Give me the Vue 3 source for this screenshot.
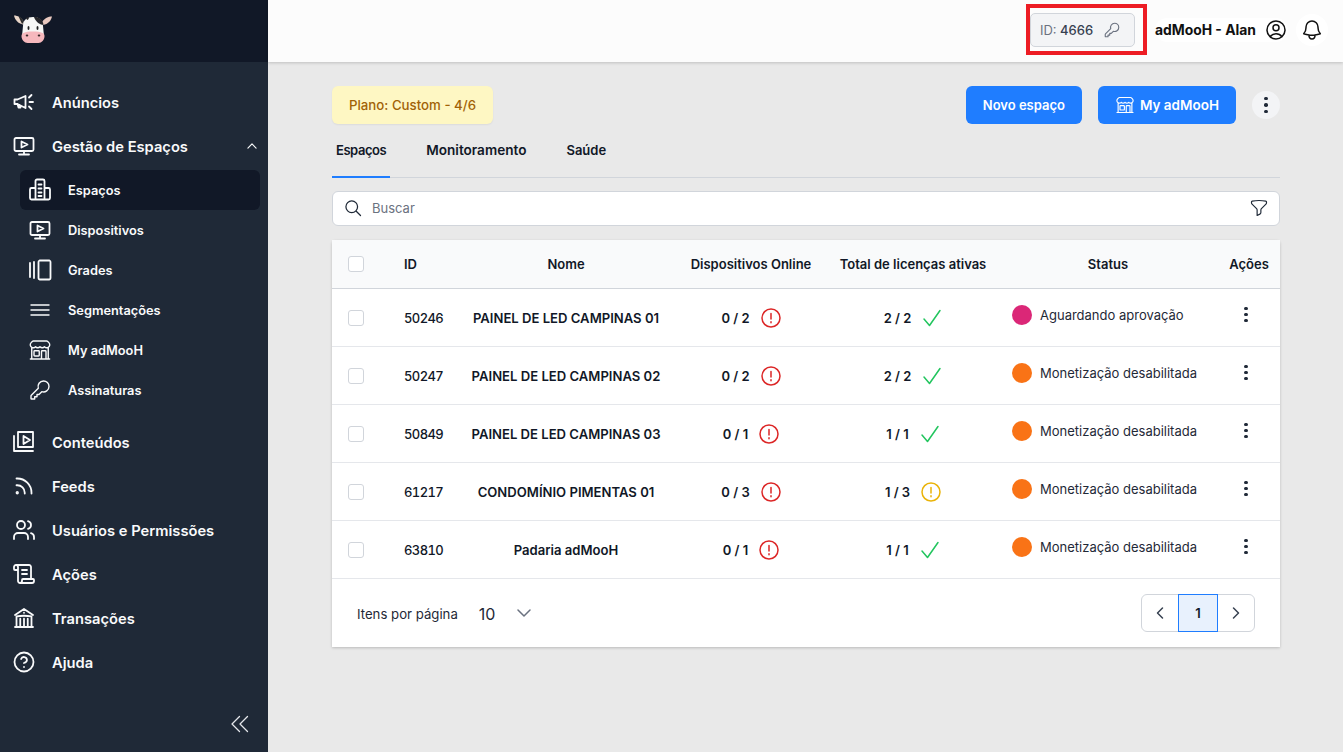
<script setup>
const icons = {
  tv: 'M4 4h16a1.5 1.5 0 0 1 1.5 1.5v10A1.5 1.5 0 0 1 20 17H4a1.5 1.5 0 0 1-1.5-1.5v-10A1.5 1.5 0 0 1 4 4Z M12 17v3.5 M7 20.5h10 M9.5 7.5l6 3-6 3Z',
  building: 'M9 1.500h6a1.500 1.500 0 0 1 1.500 1.500v18.500h-9V3A1.500 1.500 0 0 1 9 1.500Z M7.500 10H3.500A1.500 1.500 0 0 0 2 11.500v8.500a1.500 1.500 0 0 0 1.500 1.500h17a1.500 1.500 0 0 0 1.500-1.500v-8.500a1.500 1.500 0 0 0-1.500-1.500h-4 M10.500 6.500h3 M10.500 10.500h3 M10.500 14.500h3 M10.500 18h3',
  grid: 'M2 5v14 M6 4v16 M11.500 2.500h10a1.500 1.500 0 0 1 1 1.500v16a1.500 1.500 0 0 1-1 1.500h-10a1.500 1.500 0 0 1-1-1.500V4a1.500 1.500 0 0 1 1-1.500Z',
  lines: 'M3 7h18 M3 12h18 M3 17h18',
  store: 'M13.5 21v-7.5a.75.75 0 0 1 .75-.75h3a.75.75 0 0 1 .75.75V21m-4.5 0H2.36m11.14 0H18m0 0h3.64m-1.39 0V9.349M3.75 21V9.349m0 0a3.001 3.001 0 0 0 3.75-.615A2.993 2.993 0 0 0 9.75 9.75c.896 0 1.7-.393 2.25-1.016a2.993 2.993 0 0 0 2.25 1.016c.896 0 1.7-.393 2.25-1.015a3.001 3.001 0 0 0 3.75.614m-16.5 0a3.004 3.004 0 0 1-.621-4.72l1.189-1.19A1.5 1.5 0 0 1 5.378 3h13.243a1.5 1.5 0 0 1 1.06.44l1.19 1.189a3 3 0 0 1-.621 4.72M6.75 18h3.75a.75.75 0 0 0 .75-.75V13.5a.75.75 0 0 0-.75-.75H6.75a.75.75 0 0 0-.75.75v3.75c0 .414.336.75.75.75Z',
  key: 'M15.5 3a5.5 5.5 0 0 1 5.5 5.5 5.5 5.5 0 0 1-7.2 5.2L11 16.500H9v2.300H6.700V21H3.500a.5.5 0 0 1-.5-.5v-2.600a1 1 0 0 1 .300-.700l7-7A5.500 5.500 0 0 1 15.500 3Z',
  megaphone: 'M2.500 9.500v4.500h3l8 4V6L5.500 9.500H2.500Z M5.500 14l1 3.500h2l-.8-2.600 M17 7.500l2.500-2.500 M17.500 12h3.500 M17 16.500l2.500 2.500',
  media: 'M6 2h15v15H6Z M11.500 6l6.500 4-6.500 4Z M2 6v15h19',
  rss: 'M12.750 19.500v-.750a7.500 7.500 0 0 0-7.500-7.500H4.500m0-6.750h.750c7.870 0 14.250 6.380 14.250 14.250v.750M6 18.750a.750.750 0 1 1-1.500 0 .750.750 0 0 1 1.500 0Z',
  users: 'M16 21v-2a4 4 0 0 0-4-4H6a4 4 0 0 0-4 4v2 M9 3a4 4 0 1 0 0 8 4 4 0 0 0 0-8Z M22 21v-2a4 4 0 0 0-3-3.870 M16 3.130a4 4 0 0 1 0 7.750',
  scroll: 'M19 17V5a2 2 0 0 0-2-2H4 M8 21h12a2 2 0 0 0 2-2v-1a1 1 0 0 0-1-1H11a1 1 0 0 0-1 1v1a2 2 0 1 1-4 0V5a2 2 0 1 0-4 0v2a1 1 0 0 0 1 1h3 M15 8h-5 M15 12h-5',
  bank: 'M12 21v-8.250M15.750 21v-8.250M8.250 21v-8.250M3 9l9-6 9 6m-1.500 12V10.332A48.360 48.360 0 0 0 12 9.750c-2.551 0-5.056.2-7.500.582V21M3 21h18M12 6.750h.008v.008H12V6.750Z',
  help: 'M12 2.500a9.500 9.500 0 1 0 0 19 9.500 9.500 0 0 0 0-19Z M9.100 9a3 3 0 0 1 5.830 1c0 2-3 3-3 3 M12 17h.010',
}
const topItems = [
  { label: 'Conteúdos', icon: 'media' },
  { label: 'Feeds', icon: 'rss' },
  { label: 'Usuários e Permissões', icon: 'users' },
  { label: 'Ações', icon: 'scroll' },
  { label: 'Transações', icon: 'bank' },
  { label: 'Ajuda', icon: 'help' },
]
const subItems = [
  { label: 'Espaços', icon: 'building', active: true },
  { label: 'Dispositivos', icon: 'tv' },
  { label: 'Grades', icon: 'grid' },
  { label: 'Segmentações', icon: 'lines', thin: true },
  { label: 'My adMooH', icon: 'store', thin: true },
  { label: 'Assinaturas', icon: 'key', thin: true },
]
const rows = [
  { id: 50246, name: 'PAINEL DE LED CAMPINAS 01', online: '0 / 2', lic: '2 / 2', licState: 'ok', status: 'Aguardando aprovação', tone: 'pink' },
  { id: 50247, name: 'PAINEL DE LED CAMPINAS 02', online: '0 / 2', lic: '2 / 2', licState: 'ok', status: 'Monetização desabilitada', tone: 'orange' },
  { id: 50849, name: 'PAINEL DE LED CAMPINAS 03', online: '0 / 1', lic: '1 / 1', licState: 'ok', status: 'Monetização desabilitada', tone: 'orange' },
  { id: 61217, name: 'CONDOMÍNIO PIMENTAS 01', online: '0 / 3', lic: '1 / 3', licState: 'warn', status: 'Monetização desabilitada', tone: 'orange' },
  { id: 63810, name: 'Padaria adMooH', online: '0 / 1', lic: '1 / 1', licState: 'ok', status: 'Monetização desabilitada', tone: 'orange' },
]
</script>

<template>
  <div class="app">
    <aside class="sidebar">
      <div class="brand">
        <svg class="logo" viewBox="0 0 40 32" width="40" height="32">
          <path d="M11 8C8 3.500 5 1.500 1 1.500 2 6 5 9.500 10 10.500Z" fill="#e9d5c8" />
          <path d="M11 8C9 5 7.500 3 5.500 2.300L9 10Z" fill="#2b2b2b" />
          <path d="M29 8c3-4 6-5.500 10-5.500-1 4.500-4 7.500-9 8.500Z" fill="#e9c9c0" />
          <path d="M10 12c0-6 4-9 10-9s10 3 10 9l1 10H9Z" fill="#f7f7f5" />
          <path d="M21 3c4-.5 9 2 9.500 8-3 0-8-3-9.500-8Z" fill="#26262a" />
          <path d="M13 3.800c1-.5 2-.8 3-.9 0 2-1 3-2 3Z" fill="#26262a" />
          <ellipse cx="15.500" cy="14" rx="1" ry="2" fill="#222" />
          <ellipse cx="24.500" cy="14" rx="1" ry="2" fill="#222" />
          <path d="M8.500 22c0-3 3-4.500 11.500-4.500S31.500 19 31.500 22c0 4-3 7-6 7H14.500c-3 0-6-3-6-7Z" fill="#f6b8bd" />
          <ellipse cx="14" cy="21.500" rx="1.300" ry="1" fill="#3a2a2a" />
          <ellipse cx="26" cy="21.500" rx="1.300" ry="1" fill="#3a2a2a" />
        </svg>
      </div>
      <nav class="nav">
        <a class="top-item">
          <svg class="icon" viewBox="0 0 24 24"><path :d="icons.megaphone" /></svg>
          <span class="top-label">Anúncios</span>
        </a>
        <a class="top-item">
          <svg class="icon" viewBox="0 0 24 24"><path :d="icons.tv" /></svg>
          <span class="top-label">Gestão de Espaços</span>
          <svg class="caret" viewBox="0 0 24 24"><path d="M5 15.500l7-7 7 7" /></svg>
        </a>
        <div class="sub-list">
          <a v-for="s in subItems" :key="s.label" class="sub-item" :class="{ active: s.active }">
            <svg class="icon" :class="{ thin: s.thin }" viewBox="0 0 24 24"><path :d="icons[s.icon]" /></svg>
            <span>{{ s.label }}</span>
          </a>
        </div>
        <a v-for="t in topItems" :key="t.label" class="top-item">
          <svg class="icon" viewBox="0 0 24 24"><path :d="icons[t.icon]" /></svg>
          <span class="top-label">{{ t.label }}</span>
        </a>
      </nav>
      <button class="collapse" aria-label="Recolher">
        <svg viewBox="0 0 24 24" width="24" height="24"><path d="M11.500 4.500L4 12l7.500 7.500 M19.500 4.500L12 12l7.500 7.500" /></svg>
      </button>
    </aside>

    <div class="page">
      <header class="header">
        <div class="id-chip">
          <span class="id-text"><span class="id-label">ID:</span> 4666</span>
          <svg viewBox="0 0 24 24" width="18" height="18"><path :d="icons.key" /></svg>
          <span class="highlight"></span>
        </div>
        <div class="user">
          <span class="user-name">adMooH - Alan</span>
          <svg class="head-icon" viewBox="0 0 24 24"><path d="M17.982 18.725A7.488 7.488 0 0 0 12 15.750a7.488 7.488 0 0 0-5.982 2.975m11.963 0a9 9 0 1 0-11.963 0m11.963 0A8.966 8.966 0 0 1 12 21a8.966 8.966 0 0 1-5.982-2.275M15 9.750a3 3 0 1 1-6 0 3 3 0 0 1 6 0Z" /></svg>
        </div>
        <span class="bell-wrap">
          <svg class="head-icon" viewBox="0 0 24 24"><path d="M14.857 17.082a23.848 23.848 0 0 0 5.454-1.310A8.967 8.967 0 0 1 18 9.750V9A6 6 0 0 0 6 9v.750a8.967 8.967 0 0 1-2.312 6.022c1.733.640 3.560 1.085 5.455 1.310m5.714 0a24.255 24.255 0 0 1-5.714 0m5.714 0a3 3 0 1 1-5.714 0" /></svg>
        </span>
      </header>

      <main class="main">
        <div class="toolbar">
          <div class="plan">Plano: Custom - 4/6</div>
          <div class="actions">
            <button class="btn">Novo espaço</button>
            <button class="btn btn-store">
              <svg viewBox="0 0 24 24" width="20" height="20"><path :d="icons.store" /></svg>
              My adMooH
            </button>
            <button class="more" aria-label="Mais">
              <i></i><i></i><i></i>
            </button>
          </div>
        </div>

        <div class="tabs">
          <span class="tab active">Espaços</span>
          <span class="tab wide">Monitoramento</span>
          <span class="tab">Saúde</span>
        </div>

        <div class="search">
          <svg class="search-icon" viewBox="0 0 24 24" width="20" height="20"><path d="M10.500 3.500a7 7 0 1 0 0 14 7 7 0 0 0 0-14Z M15.600 15.600L21 21" /></svg>
          <span class="placeholder">Buscar</span>
          <svg class="filter-icon" viewBox="0 0 24 24" width="20" height="20"><path d="M12 3c2.755 0 5.455.232 8.083.678.533.090.917.556.917 1.096v1.044a2.250 2.250 0 0 1-.659 1.591l-5.432 5.432a2.250 2.250 0 0 0-.659 1.591v2.927a2.250 2.250 0 0 1-1.244 2.013L9.750 21v-6.568a2.250 2.250 0 0 0-.659-1.591L3.659 7.409A2.250 2.250 0 0 1 3 5.818V4.774c0-.540.384-1.006.917-1.096A48.320 48.320 0 0 1 12 3Z" /></svg>
        </div>

        <section class="table">
          <div class="tr thead">
            <div class="cell cb"><span class="checkbox"></span></div>
            <div class="cell left">ID</div>
            <div class="cell">Nome</div>
            <div class="cell">Dispositivos Online</div>
            <div class="cell">Total de licenças ativas</div>
            <div class="cell">Status</div>
            <div class="cell">Ações</div>
          </div>
          <div v-for="r in rows" :key="r.id" class="tr row">
            <div class="cell cb"><span class="checkbox"></span></div>
            <div class="cell left idv">{{ r.id }}</div>
            <div class="cell name">{{ r.name }}</div>
            <div class="cell ratio">
              <span>{{ r.online }}</span>
              <svg class="state danger" viewBox="0 0 20 20"><circle cx="10" cy="10" r="9" /><path d="M10 5.500v5.500 M10 13.800v.900" /></svg>
            </div>
            <div class="cell ratio">
              <span>{{ r.lic }}</span>
              <svg v-if="r.licState === 'ok'" class="state ok" viewBox="0 0 20 20"><path d="M2 11l5.500 6.500L18 2.500" /></svg>
              <svg v-else class="state warn" viewBox="0 0 20 20"><circle cx="10" cy="10" r="9" /><path d="M10 5.500v5.500 M10 13.800v.900" /></svg>
            </div>
            <div class="cell status">
              <span class="dot" :class="r.tone"></span>
              <span>{{ r.status }}</span>
            </div>
            <div class="cell kebab"><span class="dots"><i></i><i></i><i></i></span></div>
          </div>
          <div class="tfoot">
            <span class="per-label">Itens por página</span>
            <span class="per-value">10</span>
            <svg class="per-caret" viewBox="0 0 14 8" width="14" height="8"><path d="M1 1l6 6 6-6" /></svg>
            <div class="pager">
              <span class="pg"><svg viewBox="0 0 10 14" width="10" height="14"><path d="M7.500 2L2.500 7l5 5" /></svg></span>
              <span class="pg current">1</span>
              <span class="pg"><svg viewBox="0 0 10 14" width="10" height="14"><path d="M2.500 2l5 5-5 5" /></svg></span>
            </div>
          </div>
        </section>
      </main>
    </div>
  </div>
</template>

<style>
html, body { margin: 0; height: 100%; overflow: hidden; }
</style>

<style scoped>
* { box-sizing: border-box; }
svg { fill: none; stroke: currentColor; stroke-linecap: round; stroke-linejoin: round; }
.app {
  display: flex;
  width: 100%;
  height: 752px;
  overflow: hidden;
  font-family: Inter, "Noto Sans", sans-serif;
  background: #e9e9e9;
  color: #111827;
}

/* Sidebar */
.sidebar {
  width: 268px;
  flex: none;
  display: flex;
  flex-direction: column;
  background: #1f2937;
  color: #fff;
}
.brand {
  height: 62px;
  flex: none;
  background: #111827;
  padding: 14px 0 0 13px;
}
.logo { display: block; stroke: none; }
.logo path, .logo ellipse { stroke: none; }
.nav { padding-top: 18px; }
.top-item {
  display: flex;
  align-items: center;
  gap: 16px;
  height: 44px;
  padding-left: 12px;
  font-size: 14.700px;
  font-weight: 600;
  color: #f9fafb;
}
.top-label { margin-top: 1px; }
.icon { width: 24px; height: 24px; flex: none; stroke-width: 1.800; }
.icon.thin { stroke-width: 1.400; }
.caret { width: 14px; height: 14px; margin-left: auto; margin-right: 9px; stroke-width: 2; }
.sub-list { margin: 2px 0 10px; }
.sub-item {
  display: flex;
  align-items: center;
  gap: 16px;
  height: 40px;
  margin: 0 8px 0 20px;
  padding-left: 8px;
  border-radius: 6px;
  font-size: 12.800px;
  font-weight: 600;
  color: #f9fafb;
}
.sub-item.active { background: #111827; }
.collapse {
  margin-top: auto;
  align-self: flex-end;
  width: 24px;
  height: 24px;
  margin-right: 16px;
  margin-bottom: 16px;
  padding: 0;
  border: 0;
  background: none;
  color: #e5e7eb;
}
.collapse svg { display: block; stroke-width: 1.300; }

/* Header */
.page { flex: 1; min-width: 0; display: flex; flex-direction: column; }
.header {
  height: 62px;
  flex: none;
  display: flex;
  align-items: center;
  justify-content: flex-end;
  padding: 0 15px 2px 0;
  background: #fcfcfc;
  box-shadow: 0 1px 3px rgba(0, 0, 0, 0.18);
  position: relative;
}
.id-chip {
  position: relative;
  width: 105px;
  height: 34px;
  display: flex;
  align-items: center;
  gap: 10px;
  padding-left: 9px;
  margin-right: 20px;
  background: #f3f4f6;
  border: 1px solid #d1d5db;
  border-radius: 5px;
  font-size: 13px;
  font-weight: 500;
  color: #374151;
}
.id-chip svg { color: #6b7280; stroke-width: 1.500; }
.id-label { color: #6b7280; font-weight: 400; }
.highlight {
  position: absolute;
  left: -5px;
  top: -10px;
  width: 121px;
  height: 51px;
  border: 4px solid #ed1c24;
  pointer-events: none;
}
.user {
  display: flex;
  align-items: center;
  gap: 8px;
  height: 24px;
  margin-right: 8px;
  background: #fff;
  border-radius: 12px;
}
.user-name {
  font-size: 13.900px;
  font-weight: 700;
  color: #111;
  white-space: nowrap;
}
.head-icon { width: 24px; height: 24px; display: block; stroke-width: 1.500; color: #111; }
.bell-wrap { padding: 4px; background: #fff; border-radius: 50%; }

/* Main */
.main { flex: 1; padding: 24px 63px 0 64px; min-height: 0; }
.toolbar { display: flex; justify-content: space-between; align-items: center; height: 38px; }
.plan {
  display: flex;
  align-items: center;
  height: 38px;
  padding: 0 17px;
  background: #fef7c3;
  border-radius: 6px;
  font-size: 13.250px;
  font-weight: 500;
  color: #a16207;
  box-shadow: 0 1px 2px rgba(0, 0, 0, 0.06);
}
.actions { display: flex; align-items: center; gap: 16px; }
.btn {
  display: flex;
  align-items: center;
  gap: 5px;
  height: 38px;
  padding: 0 17px;
  border: 0;
  border-radius: 6px;
  background: #1f7dff;
  color: #fff;
  font-family: inherit;
  font-size: 13px;
  font-weight: 600;
}
.btn-store { font-size: 13.500px; }
.btn-store svg { stroke-width: 1.400; }
.more {
  width: 28px;
  height: 28px;
  padding: 0;
  border: 0;
  border-radius: 50%;
  background: #f3f4f6;
  display: flex;
  flex-direction: column;
  align-items: center;
  justify-content: center;
  gap: 3px;
}
.more i, .dots i { display: block; width: 3.500px; height: 3.500px; border-radius: 50%; background: #1f2937; }

/* Tabs */
.tabs {
  display: flex;
  gap: 32px;
  height: 54px;
  border-bottom: 1px solid #d1d5db;
}
.tab {
  display: flex;
  align-items: center;
  height: 54px;
  padding: 0 4px 1px;
  margin-bottom: -1px;
  font-size: 13px;
  font-weight: 600;
  color: #111827;
  border-bottom: 2px solid transparent;
}
.tab.wide { font-size: 13.600px; }
.tab.active { border-bottom-color: #1f7dff; letter-spacing: -0.450px; }

/* Search */
.search {
  display: flex;
  align-items: center;
  height: 35px;
  margin-top: 13px;
  padding: 0 10px 1px;
  background: #fff;
  border: 1px solid #d1d5db;
  border-radius: 6px;
}
.search-icon { stroke-width: 1.500; color: #1f2937; }
.placeholder { margin-left: 9px; font-size: 13px; color: #6b7280; }
.filter-icon { margin-left: auto; margin-right: 0; stroke-width: 1.400; color: #1f2937; }

/* Table */
.table {
  margin-top: 14px;
  background: #fff;
  box-shadow: 0 1px 3px rgba(0, 0, 0, 0.2);
  border-radius: 4px 4px 0 0;
}
.tr {
  display: grid;
  grid-template-columns: 56px 70px 216px 154px 170px 220px 62px;
  align-items: center;
}
.thead {
  height: 49px;
  background: #f9fafb;
  border-bottom: 1px solid #d1d5db;
  font-size: 13px;
  font-weight: 600;
  color: #111827;
}
.row { height: 58px; border-bottom: 1px solid #e5e7eb; font-size: 13px; }
.cell { text-align: center; white-space: nowrap; }
.left { text-align: left; padding-left: 16px; }
.cb { padding-left: 16px; display: flex; }
.checkbox {
  width: 16px;
  height: 16px;
  background: #fff;
  border: 1px solid #d1d5db;
  border-radius: 3px;
}
.idv { font-size: 13px; font-weight: 500; font-variant-numeric: tabular-nums; letter-spacing: -0.600px; }
.name { font-size: 13.100px; font-weight: 600; }
.ratio {
  display: flex;
  align-items: center;
  justify-content: center;
  gap: 11px;
  font-weight: 600;
}
.state { width: 20px; height: 20px; flex: none; stroke-width: 1.500; }
.danger { color: #dc2626; }
.ok { color: #22c55e; }
.warn { color: #eab308; }
.status {
  display: flex;
  align-items: center;
  gap: 8px;
  padding-left: 14px;
  margin-top: -6px;
  text-align: left;
  color: #1f2937;
}
.dot { width: 20px; height: 20px; border-radius: 50%; flex: none; }
.pink { background: #db2777; }
.orange { background: #f97316; }
.kebab { display: flex; justify-content: center; margin-top: -6px; padding-right: 6px; }
.dots { display: flex; flex-direction: column; gap: 2.500px; }
.tfoot {
  display: flex;
  align-items: center;
  height: 68px;
  padding: 0 25px;
  font-size: 13.200px;
  color: #1f2937;
}
.per-label, .per-value { margin-top: 1px; }
.per-value { margin-left: 21px; font-size: 16px; }
.per-caret { margin-left: 22px; stroke-width: 1.500; color: #6b7280; }
.pager {
  margin-left: auto;
  display: flex;
  height: 38px;
  border: 1px solid #d1d5db;
  border-radius: 6px;
}
.pg {
  display: flex;
  align-items: center;
  justify-content: center;
  width: 36px;
  color: #374151;
}
.pg svg { stroke-width: 1.500; }
.pg.current {
  width: 40px;
  margin: -1px 0;
  height: 38px;
  background: #e8f1fd;
  border: 1px solid #1f7dff;
  font-size: 13px;
  font-weight: 600;
  color: #111827;
}
</style>
